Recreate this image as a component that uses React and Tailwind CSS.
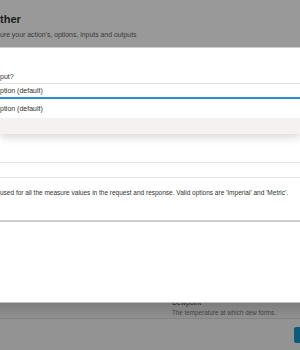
import React from "react";

const font = "font-['Segoe_UI','Liberation_Sans',Arial,sans-serif]";

const App = () => {
  return (
    <div className={`w-[300px] h-[350px] overflow-hidden bg-[#999999] flex flex-col ${font}`}>
      {/* dimmed page header behind the dialog */}
      <header className="h-[47px] shrink-0 flex flex-col pt-[11px]">
        <h1 className="text-[11px] leading-[16px] font-semibold text-[#1c1c1c]">ther</h1>
        <p className="mt-[3px] text-[6.9px] leading-[10px] text-[#3a3a3a]">
          ure your action's, options, inputs and outputs
        </p>
      </header>

      <div className="h-px shrink-0 bg-[#cdcdcd]" />

      {/* dialog panel */}
      <main className="h-[254px] shrink-0 bg-white flex flex-col pt-[24px]">
        <label className="text-[7px] leading-[10px] text-[#323130]">put?</label>

        <div className="relative mt-px">
          <div className="h-[16px] border-t border-[#e1dfdd] border-b-2 border-b-[#2b8fd0] flex items-center">
            <span className="text-[7px] leading-[10px] text-[#323130]">ption (default)</span>
          </div>

          {/* open dropdown list */}
          <ul className="absolute left-0 right-0 top-full z-10 bg-white shadow-[0_4px_8px_rgba(0,0,0,0.14)]">
            <li className="h-[19px] flex items-center text-[7px] leading-[10px] text-[#323130]">
              ption (default)
            </li>
            <li className="h-[16px] bg-[#f3f2f1]" />
          </ul>
        </div>

        <div className="h-[63px] shrink-0" />
        <div className="h-[15px] shrink-0 border-t border-[#e6e6e6]" />
        <div className="h-[43px] shrink-0 border-t border-[#e6e6e6] pt-[10px]">
          <p className="text-[6.5px] leading-[10px] text-[#323130] whitespace-nowrap">
            used for all the measure values in the request and response. Valid options are 'Imperial' and 'Metric'.
          </p>
        </div>
        <div className="h-[2px] shrink-0 bg-[#cfcfcf]" />
      </main>

      <div className="h-px shrink-0 bg-[#bdbdbd]" />

      {/* dimmed page content below */}
      <footer className="flex-1 flex flex-col overflow-hidden bg-gradient-to-b from-[#7d7d7d] to-[#8f8f8f] to-[14px]">
        <div className="pl-[172px] h-[15px] shrink-0 flex flex-col overflow-hidden">
          <span className="-mt-[5px] text-[7px] leading-[10px] text-[#262626]">Dewpoint</span>
          <span className="text-[6.3px] leading-[10px] text-[#444444]">
            The temperature at which dew forms.
          </span>
        </div>
        <div className="h-px shrink-0 bg-[#828282]" />
        <div className="flex-1 bg-[#939393] flex justify-end pt-[8px]">
          <button className="w-[10px] h-[16px] -mr-[4px] rounded-[2px] bg-[#0f5a7a]" />
        </div>
      </footer>
    </div>
  );
};

export default App;
